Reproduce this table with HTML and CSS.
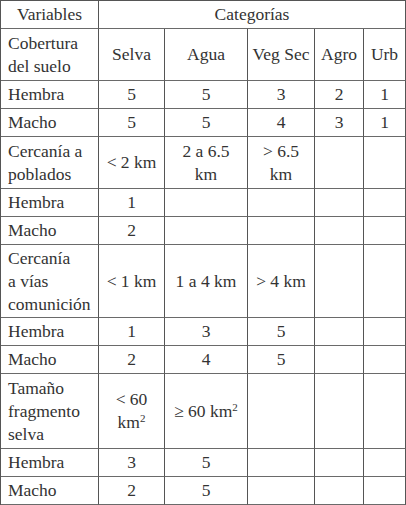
FILE: index.html
```html
<!DOCTYPE html>
<html lang="es">
<head>
<meta charset="utf-8">
<title>Variables y categorías</title>
<link rel="stylesheet" href="styles.css">
</head>
<body>
<div class="grid">
  <div class="cell"><span class="t">Variables</span></div>
  <div class="cell span5"><span class="t">Categorías</span></div>

  <div class="cell lbl"><span class="t">Cobertura<br>del suelo</span></div>
  <div class="cell"><span class="t">Selva</span></div>
  <div class="cell"><span class="t">Agua</span></div>
  <div class="cell"><span class="t">Veg Sec</span></div>
  <div class="cell"><span class="t">Agro</span></div>
  <div class="cell"><span class="t">Urb</span></div>

  <div class="cell lbl"><span class="t">Hembra</span></div>
  <div class="cell"><span class="t">5</span></div>
  <div class="cell"><span class="t">5</span></div>
  <div class="cell"><span class="t">3</span></div>
  <div class="cell"><span class="t">2</span></div>
  <div class="cell"><span class="t">1</span></div>

  <div class="cell lbl"><span class="t">Macho</span></div>
  <div class="cell"><span class="t">5</span></div>
  <div class="cell"><span class="t">5</span></div>
  <div class="cell"><span class="t">4</span></div>
  <div class="cell"><span class="t">3</span></div>
  <div class="cell"><span class="t">1</span></div>

  <div class="cell lbl"><span class="t">Cercanía a<br>poblados</span></div>
  <div class="cell"><span class="t">&lt; 2 km</span></div>
  <div class="cell"><span class="t">2 a 6.5<br>km</span></div>
  <div class="cell"><span class="t">&gt; 6.5<br>km</span></div>
  <div class="cell"></div>
  <div class="cell"></div>

  <div class="cell lbl"><span class="t">Hembra</span></div>
  <div class="cell"><span class="t">1</span></div>
  <div class="cell"></div>
  <div class="cell"></div>
  <div class="cell"></div>
  <div class="cell"></div>

  <div class="cell lbl"><span class="t">Macho</span></div>
  <div class="cell"><span class="t">2</span></div>
  <div class="cell"></div>
  <div class="cell"></div>
  <div class="cell"></div>
  <div class="cell"></div>

  <div class="cell lbl"><span class="t">Cercanía<br>a vías<br>comunición</span></div>
  <div class="cell"><span class="t">&lt; 1 km</span></div>
  <div class="cell"><span class="t">1 a 4 km</span></div>
  <div class="cell"><span class="t">&gt; 4 km</span></div>
  <div class="cell"></div>
  <div class="cell"></div>

  <div class="cell lbl"><span class="t">Hembra</span></div>
  <div class="cell"><span class="t">1</span></div>
  <div class="cell"><span class="t">3</span></div>
  <div class="cell"><span class="t">5</span></div>
  <div class="cell"></div>
  <div class="cell"></div>

  <div class="cell lbl"><span class="t">Macho</span></div>
  <div class="cell"><span class="t">2</span></div>
  <div class="cell"><span class="t">4</span></div>
  <div class="cell"><span class="t">5</span></div>
  <div class="cell"></div>
  <div class="cell"></div>

  <div class="cell lbl"><span class="t">Tamaño<br>fragmento<br>selva</span></div>
  <div class="cell"><span class="t">&lt; 60<br>km<sup class="sq">2</sup></span></div>
  <div class="cell"><span class="t">≥ 60 km<sup class="sq">2</sup></span></div>
  <div class="cell"></div>
  <div class="cell"></div>
  <div class="cell"></div>

  <div class="cell lbl"><span class="t">Hembra</span></div>
  <div class="cell"><span class="t">3</span></div>
  <div class="cell"><span class="t">5</span></div>
  <div class="cell"></div>
  <div class="cell"></div>
  <div class="cell"></div>

  <div class="cell lbl"><span class="t">Macho</span></div>
  <div class="cell"><span class="t">2</span></div>
  <div class="cell"><span class="t">5</span></div>
  <div class="cell"></div>
  <div class="cell"></div>
  <div class="cell"></div>
</div>
</body>
</html>
```

FILE: styles.css
```css
html, body {
  margin: 0;
  padding: 0;
  background: #ffffff;
}

body {
  font-family: "Liberation Serif", serif;
  font-size: 17.5px;
}

.grid {
  display: grid;
  grid-template-columns: 98px 66px 83px 67px 49px 42px;
  grid-template-rows: 28px 52px 28px 28px 52px 28px 28px 73px 28px 28px 75px 28px 28px;
  width: 406px;
  box-sizing: border-box;
  border-left: 1px solid #555555;
  border-top: 1px solid #555555;
  font-family: "Liberation Serif", serif;
  line-height: 23px;
  color: #333333;
}

.cell {
  box-sizing: border-box;
  border-right: 1px solid #555555;
  border-bottom: 1px solid #6a6a6a;
  display: flex;
  align-items: center;
  justify-content: center;
  text-align: center;
  white-space: nowrap;
  padding: 0 2px;
}

.cell.lbl {
  justify-content: flex-start;
  text-align: left;
  padding-left: 7px;
}

.t {
  font-family: "Liberation Serif", serif;
}

.span5 {
  grid-column: span 5;
}

.sq {
  font-size: 11px;
  line-height: 0;
  vertical-align: 6px;
}
```
